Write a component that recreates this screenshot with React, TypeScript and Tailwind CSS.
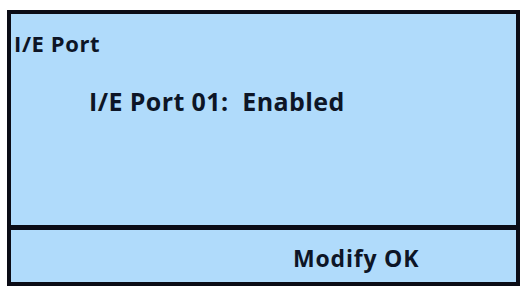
export default function App() {
  return (
    <div className="w-[523px] h-[287px] bg-white pt-[10px] pl-[7px]" style={{ fontFamily: '"Open Sans", Lato, sans-serif' }}>
      <div className="flex h-[276px] w-[513px] flex-col border-4 border-[#0b0c16] bg-[#b0dbfb] text-[#0d1526]">
        <div className="flex-1 border-b-[5px] border-[#0b0c16] pl-[3px] pt-[15px]">
          <div className="text-[22px] font-bold leading-[28px] tracking-[0.6px]">I/E Port</div>
          <div className="mt-[29px] pl-[75px] text-[25px] font-bold leading-[30px] tracking-[0.4px] whitespace-pre">I/E Port 01:  Enabled</div>
        </div>
        <div className="h-[52px] pl-[282px] pt-[14px]">
          <div className="text-[23px] font-bold leading-[28px] tracking-[0.8px]">Modify OK</div>
        </div>
      </div>
    </div>
  )
}
